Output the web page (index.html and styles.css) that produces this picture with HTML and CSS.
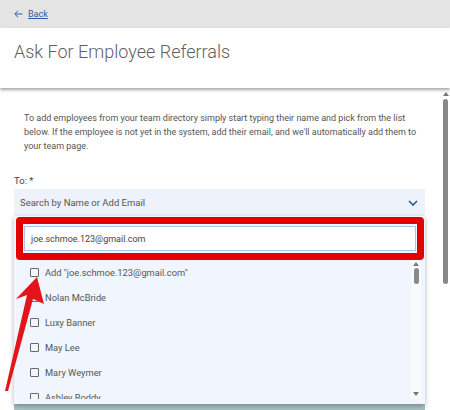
FILE: index.html
```html
<!DOCTYPE html>
<html lang="en">
<head>
    <meta charset="UTF-8">
    <meta name="viewport" content="width=device-width, initial-scale=1.0">
    <title>Ask For Employee Referrals</title>
    <link rel="stylesheet" href="styles.css">
</head>
<body>
    <div class="topbar">
        <a class="back" href="#">
            <svg class="back-arrow" width="9" height="8" viewBox="0 0 9 8">
                <path d="M8.5 4 H1 M4 0.8 L0.8 4 L4 7.2" fill="none" stroke="#2f5da3" stroke-width="1"/>
            </svg>
            <span class="back-text">Back</span>
        </a>
    </div>
    <div class="header">
        <h1>Ask For Employee Referrals</h1>
    </div>
    <div class="main">
        <div class="content">
            <p class="intro">To add employees from your team directory simply start typing their name and pick from the list<br>below. If the employee is not yet in the system, add their email, and we'll automatically add them to<br>your team page.</p>
            <label class="to-label">To: *</label>
            <div class="select">
                <span class="placeholder">Search by Name or Add Email</span>
                <svg class="chevron" width="10" height="6" viewBox="0 0 10 6">
                    <path d="M1 1 L5 5 L9 1" fill="none" stroke="#2d4f80" stroke-width="1.5"/>
                </svg>
            </div>
            <div class="dropdown">
                <div class="search-wrap">
                    <div class="search-input">joe.schmoe.123@gmail.com</div>
                </div>
                <div class="list-wrap">
                    <ul class="options">
                        <li><span class="box"></span>Add "joe.schmoe.123@gmail.com"</li>
                        <li><span class="box"></span>Nolan McBride</li>
                        <li><span class="box"></span>Luxy Banner</li>
                        <li><span class="box"></span>May Lee</li>
                        <li><span class="box"></span>Mary Weymer</li>
                        <li><span class="box"></span>Ashley Roddy</li>
                    </ul>
                    <div class="list-scroll">
                        <span class="tri up"></span>
                        <span class="list-thumb"></span>
                        <span class="tri down"></span>
                    </div>
                </div>
            </div>
            <div class="below"></div>
        </div>
        <div class="page-scroll">
            <span class="tri up"></span>
            <span class="page-thumb"></span>
        </div>
    </div>

    <!-- pointer arrow -->
    <svg class="pointer" width="60" height="130" viewBox="0 0 60 130">
        <polygon points="37,4 16,26 27,22 5,118 8,118 33,26 44,31" fill="#e4141b"/>
    </svg>
</body>
</html>
```

FILE: styles.css
```css
body {
    margin: 0;
    font-family: Roboto, 'Liberation Sans', sans-serif;
    background: #ffffff;
    width: 450px;
    height: 410px;
    overflow: hidden;
    position: relative;
}

.topbar {
    height: 28px;
    background: #e4e4e5;
    display: flex;
    align-items: center;
    padding-left: 14px;
}

.back {
    color: #2f5da3;
    font-size: 9px;
    text-decoration: none;
    display: flex;
    align-items: center;
}

.back-text {
    text-decoration: underline;
    margin-left: 5px;
}

.header {
    height: 60px;
    background: #fff;
    box-shadow: 0 2px 3px rgba(0, 0, 0, 0.35);
    position: relative;
    z-index: 1;
}

h1 {
    margin: 0;
    padding: 13px 0 0 14px;
    font-size: 18px;
    font-weight: 300;
    color: #5f5f5f;
}

.main {
    display: flex;
    height: 322px;
}

.content {
    flex: 1;
    padding: 0 12px 0 14px;
}

.intro {
    margin: 23px 0 0 10px;
    font-size: 9px;
    line-height: 14px;
    color: #555;
    white-space: nowrap;
}

.to-label {
    display: block;
    margin-top: 21px;
    font-size: 9.5px;
    line-height: 14px;
    color: #444;
}

.select {
    margin-top: 1px;
    height: 27px;
    background: #edf2fb;
    display: flex;
    align-items: center;
    justify-content: space-between;
    padding: 0 7px 0 6px;
}

.placeholder {
    font-size: 9.5px;
    color: #555;
}

.dropdown {
    height: 188px;
    background: #f0f5fe;
    box-shadow: 0 2px 5px rgba(0, 0, 0, 0.3);
    position: relative;
    z-index: 2;
    display: flex;
    flex-direction: column;
}

.search-wrap {
    margin: 1px 1px 0 2px;
    border: 7px solid #e20000;
    border-radius: 4px;
    padding: 2px 1px;
}

.search-input {
    height: 23px;
    background: #fff;
    border: 1px solid #a9c3ea;
    display: flex;
    align-items: center;
    padding-left: 6px;
    font-size: 9px;
    color: #444;
}

.list-wrap {
    display: flex;
    height: 139px;
    padding-right: 4px;
}

.options {
    flex: 1;
    list-style: none;
    margin: 0;
    padding: 0;
    overflow: hidden;
}

.options li {
    height: 25px;
    display: flex;
    align-items: center;
    padding-left: 16px;
    font-size: 9.3px;
    color: #555;
}

.box {
    width: 7px;
    height: 7px;
    border: 1.3px solid #666;
    border-radius: 1px;
    margin-right: 6px;
}

.list-scroll {
    width: 10px;
    background: #f8fafd;
    display: flex;
    flex-direction: column;
    align-items: center;
    padding-top: 2px;
}

.list-thumb {
    width: 5px;
    height: 16px;
    background: #8a8a8a;
    border-radius: 3px;
    margin-top: 2px;
}

.tri {
    width: 0;
    height: 0;
    border-left: 3.5px solid transparent;
    border-right: 3.5px solid transparent;
}

.tri.up {
    border-bottom: 4px solid #777;
}

.tri.down {
    border-top: 4px solid #777;
    margin-top: auto;
    margin-bottom: 3px;
}

.below {
    height: 6px;
    background: #a9c2c3;
}

.page-scroll {
    width: 13px;
    display: flex;
    flex-direction: column;
    align-items: center;
    padding: 4px 0 0 4px;
    box-sizing: border-box;
}

.page-thumb {
    width: 5px;
    height: 185px;
    background: #888;
    border-radius: 3px;
    margin-top: 3px;
}

.pointer {
    position: absolute;
    left: 0;
    top: 273px;
    z-index: 3;
}
```
